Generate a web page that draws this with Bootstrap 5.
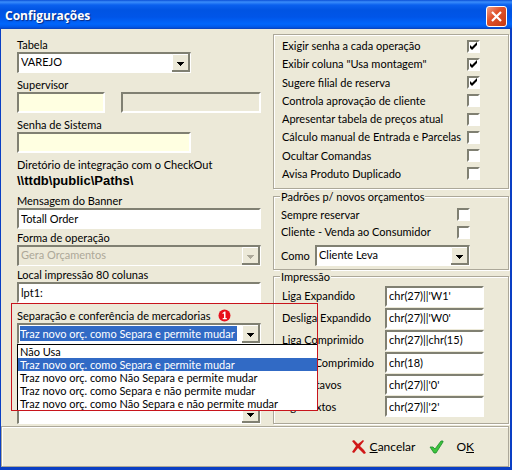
<!DOCTYPE html>
<html lang="pt-BR">
<head>
<meta charset="utf-8">
<meta name="viewport" content="width=device-width, initial-scale=1">
<title>Configurações</title>
<link href="https://cdn.jsdelivr.net/npm/bootstrap@5.3.0/dist/css/bootstrap.min.css" rel="stylesheet">
<style>
  body { font-family: Lato, "Liberation Sans", sans-serif; font-size: 11px; line-height: 14px; color: #000; background: #ece9d8; }
  .win { background: #ece9d8; border: solid #0a3fc4; border-width: 0 2px 3px 1px; }
  .titlebar { height: 29px; margin: 0 -2px 0 -1px; padding: 3px 5px 0 5px; background: linear-gradient(#0a4fd6 0, #3a8dfb 2px, #0a60ee 5px, #0054e3 10px, #0055e8 17px, #0066fc 24px, #0058e8 27px, #0a40b8 29px); }
  .titlebar h1 { font: bold 12px/20px "Open Sans", sans-serif; color: #fff; text-shadow: 1px 1px 1px #0a2a80; }
  .close-x { width: 21px; height: 21px; border: 1px solid #fff; border-radius: 3px; background: linear-gradient(135deg, #f0a088, #e0532c 40%, #c63a12); }
  .main { padding: 5px 1px 1px 16px; column-gap: 12px; }
  .colleft { flex: 0 0 244px; }
  .colright { min-width: 0; }
  .fld + .fld { margin-top: 2px; }
  .fld.wide { margin-top: 5px; }
  .box { display: block; height: 21px; padding: 0 2px 1px 2px; border: 2px solid; border-color: #808072 #fff #fff #808072; border-radius: 0; background: #fff; color: #000; font-size: 11px; line-height: 14px; outline: 0; width: 100%; }
  .cream { background: #ffffe1; }
  .flatbox { background: #ece9d8; }
  .w-sup { width: 88px; }
  .w-mid { width: 174px; }
  .drop { appearance: none; border-width: 2px 1px 1px 2px; padding: 0 20px 2px 2px; background: #fff url("data:image/svg+xml,%3Csvg xmlns='http://www.w3.org/2000/svg' width='18' height='18'%3E%3Cpath fill='%23ece9d8' d='M0 0h18v18H0z'/%3E%3Cpath stroke='%23fff' fill='none' d='M.5 16V.5H16'/%3E%3Cpath stroke='%23808072' stroke-width='2' fill='none' d='M0 17h17V0'/%3E%3Cpath d='M5 8h7v1h-1v1h-1v1H9v1H8v-1H7v-1H6V9H5z'/%3E%3C/svg%3E") right center no-repeat; }
  .drop:disabled { opacity: 1; color: #aca899; background-color: #ece9d8; background-image: url("data:image/svg+xml,%3Csvg xmlns='http://www.w3.org/2000/svg' width='18' height='18'%3E%3Cpath fill='%23ece9d8' d='M0 0h18v18H0z'/%3E%3Cpath stroke='%23fff' fill='none' d='M.5 16V.5H16'/%3E%3Cpath stroke='%23808072' stroke-width='2' fill='none' d='M0 17h17V0'/%3E%3Cpath fill='%23aca899' d='M5 8h7v1h-1v1h-1v1H9v1H8v-1H7v-1H6V9H5z'/%3E%3C/svg%3E"); }
  .picked { color: #fff; padding: 1px 23px 2px 1px; background-color: transparent; background-image: url("data:image/svg+xml,%3Csvg xmlns='http://www.w3.org/2000/svg' width='18' height='18'%3E%3Cpath fill='%23ece9d8' d='M0 0h18v18H0z'/%3E%3Cpath stroke='%23fff' fill='none' d='M.5 16V.5H16'/%3E%3Cpath stroke='%23808072' stroke-width='2' fill='none' d='M0 17h17V0'/%3E%3Cpath d='M5 8h7v1h-1v1h-1v1H9v1H8v-1H7v-1H6V9H5z'/%3E%3C/svg%3E"), linear-gradient(#316ac5, #316ac5), linear-gradient(#fff, #fff); background-position: right center, 0 0, 0 0; background-origin: padding-box, content-box, padding-box; background-clip: padding-box, content-box, padding-box; background-repeat: no-repeat; }
  .pathtext { font: bold 13px/15px "Liberation Sans", Arial, sans-serif; margin: 1px 0 6px; }
  .marked { margin-top: 5px !important; line-height: 15px; }
  .redframe { top: -5px; left: -6px; right: -57px; height: 108px; border: 1px solid #c8141c; pointer-events: none; z-index: 3; }
  .poplist { top: 100%; left: 0; right: -57px; border: 1px solid #000; background: #fff; z-index: 2; }
  .poplist li { line-height: 13px; padding: 0 2px; }
  .poplist li.on { background: #316ac5; color: #fff; }
  .last { margin-top: 43px !important; }
  .grp { border: 1px solid #aca899; box-shadow: 1px 1px 0 #fff, inset 1px 1px 0 #fff; }
  .g1 { min-height: 155px; padding: 2px 28px 5px 8px; }
  .g2 { min-height: 74px; margin-top: 7px; padding: 9px 38px 3px 7px; }
  .g3 { min-height: 148px; margin-top: 6px; padding: 8px 24px 5px 8px; }
  .cap { font-size: 11px; line-height: 13px; top: -7px; left: 6px; background: #ece9d8; padding: 0 1px; }
  .tick { appearance: none; width: 13px; height: 13px; margin: 0; border: 2px solid; border-color: #808072 #fff #fff #808072; background: #fff; flex: none; }
  .tick:checked { background: #fff url("data:image/svg+xml,%3Csvg xmlns='http://www.w3.org/2000/svg' width='9' height='9'%3E%3Cpath d='M1 3l2 2 5-5v3L3 8 1 6z'/%3E%3C/svg%3E") 0 0 no-repeat; }
  .como { width: 155px; }
  .w-prn { width: 99px; }
  .foot { height: 41px; margin: 1px 1px 0 0; padding: 0 34px 0 0; border: 1px solid #aca899; box-shadow: inset 1px 1px 0 #fff; column-gap: 14px; }
  .act { border: 0; background: none; padding: 0; font-size: 12px; line-height: 14px; color: #000; }
</style>
</head>
<body>
<div class="win">
  <header class="titlebar d-flex justify-content-between align-items-center">
    <h1 class="m-0">Configurações</h1>
    <button type="button" class="close-x p-0 d-flex align-items-center justify-content-center" aria-label="Fechar">
      <svg width="13" height="13" viewBox="0 0 13 13"><path d="M2 2l9 9M11 2l-9 9" stroke="#fff" stroke-width="2.2"/></svg>
    </button>
  </header>

  <main class="main d-flex">
    <section class="colleft pt-1">
      <div class="fld"><label class="d-block" for="tabela">Tabela</label>
        <select id="tabela" class="box drop w-mid"><option>VAREJO</option></select></div>
      <div class="fld wide"><label class="d-block" for="sup">Supervisor</label>
        <div class="d-flex justify-content-between"><input id="sup" class="box cream w-sup"><input class="box flatbox w-sup flex-grow-1 ms-3" aria-label="Nome do supervisor" readonly></div></div>
      <div class="fld wide"><label class="d-block" for="senha">Senha de Sistema</label>
        <input id="senha" type="password" class="box cream w-mid"></div>
      <div class="fld wide"><div>Diretório de integração com o CheckOut</div>
        <div class="pathtext">\\ttdb\public\Paths\</div></div>
      <div class="fld"><label class="d-block" for="msg">Mensagem do Banner</label>
        <input id="msg" class="box" value="Totall Order"></div>
      <div class="fld"><label class="d-block" for="forma">Forma de operação</label>
        <select id="forma" class="box drop" disabled><option>Gera Orçamentos</option></select></div>
      <div class="fld"><label class="d-block" for="local">Local impressão 80 colunas</label>
        <input id="local" class="box" value="lpt1:"></div>
      <div class="fld marked position-relative">
        <div class="redframe position-absolute"></div>
        <div class="d-flex align-items-center gap-2"><label for="sep">Separação e conferência de mercadorias</label>
          <svg width="13" height="13" viewBox="0 0 13 13" aria-hidden="true"><circle cx="6.500" cy="6.500" r="6" fill="#e8101c"/><path d="M4.500 4L6.500 2.500h1V9h1.300v1.300H4.700V9H6V4.500L4.500 5z" fill="#fff"/></svg></div>
        <select id="sep" class="box drop picked"><option>Traz novo orç. como Separa e permite mudar</option></select>
        <ul class="poplist position-absolute list-unstyled m-0" role="listbox" aria-label="Separação">
          <li role="option">Não Usa</li>
          <li role="option" class="on" aria-selected="true">Traz novo orç. como Separa e permite mudar</li>
          <li role="option">Traz novo orç. como Não Separa e permite mudar</li>
          <li role="option">Traz novo orç. como Separa e não permite mudar</li>
          <li role="option">Traz novo orç. como Não Separa e não permite mudar</li>
        </ul>
      </div>
      <div class="fld last pt-3"><select class="box drop" aria-label="Outra opção"><option></option></select></div>
    </section>

    <section class="colright flex-grow-1 d-flex flex-column">
      <div class="grp g1 d-flex flex-column">
        <div class="d-flex flex-fill align-items-center justify-content-between"><label for="c1">Exigir senha a cada operação</label><input id="c1" type="checkbox" class="tick" checked></div>
        <div class="d-flex flex-fill align-items-center justify-content-between"><label for="c2">Exibir coluna "Usa montagem"</label><input id="c2" type="checkbox" class="tick" checked></div>
        <div class="d-flex flex-fill align-items-center justify-content-between"><label for="c3">Sugere filial de reserva</label><input id="c3" type="checkbox" class="tick" checked></div>
        <div class="d-flex flex-fill align-items-center justify-content-between"><label for="c4">Controla aprovação de cliente</label><input id="c4" type="checkbox" class="tick"></div>
        <div class="d-flex flex-fill align-items-center justify-content-between"><label for="c5">Apresentar tabela de preços atual</label><input id="c5" type="checkbox" class="tick"></div>
        <div class="d-flex flex-fill align-items-center justify-content-between"><label class="text-nowrap" for="c6">Cálculo manual de Entrada e Parcelas</label><input id="c6" type="checkbox" class="tick"></div>
        <div class="d-flex flex-fill align-items-center justify-content-between"><label for="c7">Ocultar Comandas</label><input id="c7" type="checkbox" class="tick"></div>
        <div class="d-flex flex-fill align-items-center justify-content-between"><label for="c8">Avisa Produto Duplicado</label><input id="c8" type="checkbox" class="tick"></div>
      </div>
      <div class="grp g2 d-flex flex-column position-relative" role="group" aria-labelledby="cap2">
        <div id="cap2" class="cap position-absolute">Padrões p/ novos orçamentos</div>
        <div class="d-flex flex-fill align-items-center justify-content-between"><label for="d1">Sempre reservar</label><input id="d1" type="checkbox" class="tick"></div>
        <div class="d-flex flex-fill align-items-center justify-content-between"><label for="d2">Cliente - Venda ao Consumidor</label><input id="d2" type="checkbox" class="tick"></div>
        <div class="d-flex align-items-center justify-content-between pt-1"><label for="como">Como</label><select id="como" class="box drop como"><option>Cliente Leva</option></select></div>
      </div>
      <div class="grp g3 d-flex flex-column flex-grow-1 position-relative" role="group" aria-labelledby="cap3">
        <div id="cap3" class="cap position-absolute">Impressão</div>
        <div class="d-flex flex-fill align-items-center justify-content-between"><label for="p1">Liga Expandido</label><input id="p1" class="box w-prn" value="chr(27)||'W1'"></div>
        <div class="d-flex flex-fill align-items-center justify-content-between"><label for="p2">Desliga Expandido</label><input id="p2" class="box w-prn" value="chr(27)||'W0'"></div>
        <div class="d-flex flex-fill align-items-center justify-content-between"><label for="p3">Liga Comprimido</label><input id="p3" class="box w-prn" value="chr(27)||chr(15)"></div>
        <div class="d-flex flex-fill align-items-center justify-content-between"><label for="p4">Deslig Comprimido</label><input id="p4" class="box w-prn" value="chr(18)"></div>
        <div class="d-flex flex-fill align-items-center justify-content-between"><label for="p5">Liga Oitavos</label><input id="p5" class="box w-prn" value="chr(27)||'0'"></div>
        <div class="d-flex flex-fill align-items-center justify-content-between"><label for="p6">Liga Sextos</label><input id="p6" class="box w-prn" value="chr(27)||'2'"></div>
      </div>
    </section>
  </main>

  <footer class="foot d-flex align-items-center justify-content-end">
    <button type="button" class="act d-flex align-items-center gap-1">
      <svg width="14" height="14" viewBox="0 0 14 14"><path d="M0 1l2-1 4 4 5-4 1 1-4 5 4 4 2 3-2 1-6-6-4 5-2-1 4-6z" fill="#d01818"/></svg>
      <span><u>C</u>ancelar</span>
    </button>
    <button type="button" class="act d-flex align-items-center gap-2">
      <svg width="15" height="14" viewBox="0 0 15 14"><path d="M1 7l3 0 2 2 6-8 2 0 0 1-7 11-2 0z" fill="#3cc43c" stroke="#1c8c2c" stroke-width=".8"/></svg>
      <span class="ps-1">O<u>K</u></span>
    </button>
  </footer>
</div>
<script src="https://cdn.jsdelivr.net/npm/bootstrap@5.3.0/dist/js/bootstrap.bundle.min.js"></script>
</body>
</html>
